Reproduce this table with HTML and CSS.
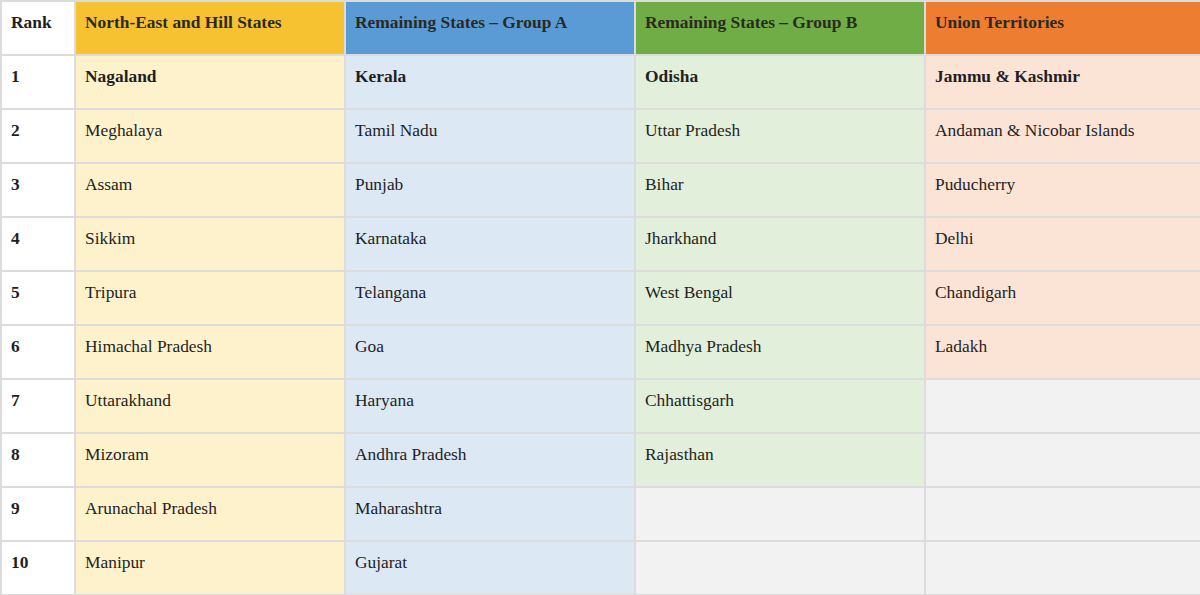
FILE: index.html
```html
<!DOCTYPE html>
<html>
<head>
<meta charset="utf-8">
<link rel="stylesheet" href="styles.css">
</head>
<body>
<table class="rank-table">
  <colgroup>
    <col class="c-rank"><col class="c-ne"><col class="c-a"><col class="c-b"><col class="c-ut">
  </colgroup>
  <thead>
    <tr>
      <th class="h-rank">Rank</th>
      <th class="h-ne">North-East and Hill States</th>
      <th class="h-a">Remaining States – Group A</th>
      <th class="h-b">Remaining States – Group B</th>
      <th class="h-ut">Union Territories</th>
    </tr>
  </thead>
  <tbody>
    <tr class="top"><td class="rank">1</td><td class="ne">Nagaland</td><td class="a">Kerala</td><td class="b">Odisha</td><td class="ut">Jammu &amp; Kashmir</td></tr>
    <tr><td class="rank">2</td><td class="ne">Meghalaya</td><td class="a">Tamil Nadu</td><td class="b">Uttar Pradesh</td><td class="ut">Andaman &amp; Nicobar Islands</td></tr>
    <tr><td class="rank">3</td><td class="ne">Assam</td><td class="a">Punjab</td><td class="b">Bihar</td><td class="ut">Puducherry</td></tr>
    <tr><td class="rank">4</td><td class="ne">Sikkim</td><td class="a">Karnataka</td><td class="b">Jharkhand</td><td class="ut">Delhi</td></tr>
    <tr><td class="rank">5</td><td class="ne">Tripura</td><td class="a">Telangana</td><td class="b">West Bengal</td><td class="ut">Chandigarh</td></tr>
    <tr><td class="rank">6</td><td class="ne">Himachal Pradesh</td><td class="a">Goa</td><td class="b">Madhya Pradesh</td><td class="ut">Ladakh</td></tr>
    <tr><td class="rank">7</td><td class="ne">Uttarakhand</td><td class="a">Haryana</td><td class="b">Chhattisgarh</td><td class="empty"></td></tr>
    <tr><td class="rank">8</td><td class="ne">Mizoram</td><td class="a">Andhra Pradesh</td><td class="b">Rajasthan</td><td class="empty"></td></tr>
    <tr><td class="rank">9</td><td class="ne">Arunachal Pradesh</td><td class="a">Maharashtra</td><td class="empty"></td><td class="empty"></td></tr>
    <tr><td class="rank">10</td><td class="ne">Manipur</td><td class="a">Gujarat</td><td class="empty"></td><td class="empty"></td></tr>
  </tbody>
</table>
</body>
</html>
```

FILE: styles.css
```css
html, body {
  margin: 0;
  padding: 0;
  background: #ffffff;
}
.rank-table {
  width: 1200px;
  border-collapse: collapse;
  table-layout: fixed;
  font-family: "Liberation Serif", "Times New Roman", serif;
  font-size: 17.4px;
  color: #1f1f1f;
}
.c-rank { width: 74px; }
.c-ne { width: 270px; }
.c-a { width: 290px; }
.c-b { width: 290px; }
.c-ut { width: 276px; }
.rank-table th,
.rank-table td {
  border: 2px solid #dcdcdc;
  height: 54px;
  box-sizing: border-box;
  padding: 10px 10px 0 9px;
  vertical-align: top;
  text-align: left;
  line-height: 20px;
}
.rank-table th { font-weight: bold; color: #2a2a1f; }
.h-rank { background: #ffffff; color: #1f1f1f !important; }
.h-ne { background: #f6c232; }
.h-a { background: #5b9bd5; }
.h-b { background: #70ad47; }
.h-ut { background: #ed7d31; }
.rank { background: #ffffff; font-weight: bold; }
.ne { background: #fef2cc; }
.a { background: #dde8f5; }
.b { background: #e2efda; }
.ut { background: #fbe4d6; }
.empty { background: #f2f2f2; }
.top td { font-weight: bold; }
```
